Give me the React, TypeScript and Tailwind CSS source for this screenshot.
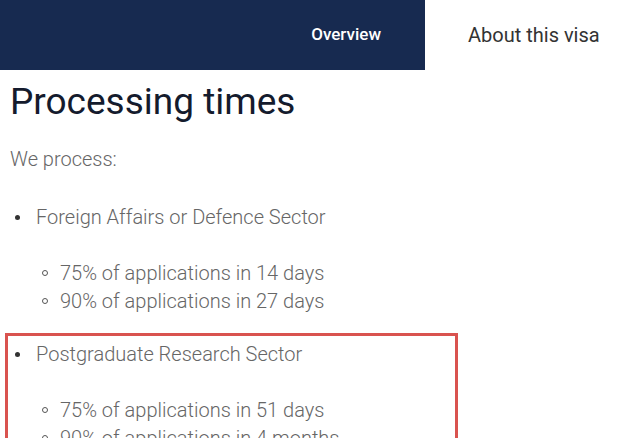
const font = { fontFamily: "Roboto, 'Liberation Sans', sans-serif" };

function Disc({ children }: { children: React.ReactNode }) {
  return (
    <div className="flex items-center">
      <span className="ml-[15px] mr-[16px] h-[5px] w-[5px] rounded-full bg-[#333]" />
      <span>{children}</span>
    </div>
  );
}

function Circle({ children }: { children: React.ReactNode }) {
  return (
    <div className="flex items-center">
      <span className="ml-[42px] mr-[12px] h-[6px] w-[6px] rounded-full border border-[#555]" />
      <span>{children}</span>
    </div>
  );
}

function Sector({ name, items }: { name: string; items: string[] }) {
  return (
    <div>
      <Disc>{name}</Disc>
      <div className="mt-[28px]">
        {items.map((item) => (
          <Circle key={item}>{item}</Circle>
        ))}
      </div>
    </div>
  );
}

export default function App() {
  return (
    <div className="h-[438px] w-[640px] overflow-hidden bg-white" style={font}>
      <nav className="flex h-[70px] items-center">
        <div className="flex h-full w-[425px] items-center justify-end bg-[#172a50] pr-[44px] text-[17px] font-medium text-white">
          Overview
        </div>
        <div className="pl-[43px] text-[20px] text-[#333]">About this visa</div>
      </nav>
      <h1 className="mt-[11px] pl-[10px] text-[37px] leading-[42px] text-[#141b2d]">Processing times</h1>
      <div className="mt-[22px] text-[20px] font-light leading-[28px] text-[#666]">
        <p className="pl-[10px]">We process:</p>
        <div className="mt-[30px]">
          <Sector
            name="Foreign Affairs or Defence Sector"
            items={["75% of applications in 14 days", "90% of applications in 27 days"]}
          />
        </div>
        <div className="mt-[18px] ml-[5px] w-[453px] border-[3px] border-[#d9534f] pt-[4px]">
          <div className="-ml-[8px]">
            <Sector
              name="Postgraduate Research Sector"
              items={["75% of applications in 51 days", "90% of applications in 4 months"]}
            />
          </div>
        </div>
      </div>
    </div>
  );
}
